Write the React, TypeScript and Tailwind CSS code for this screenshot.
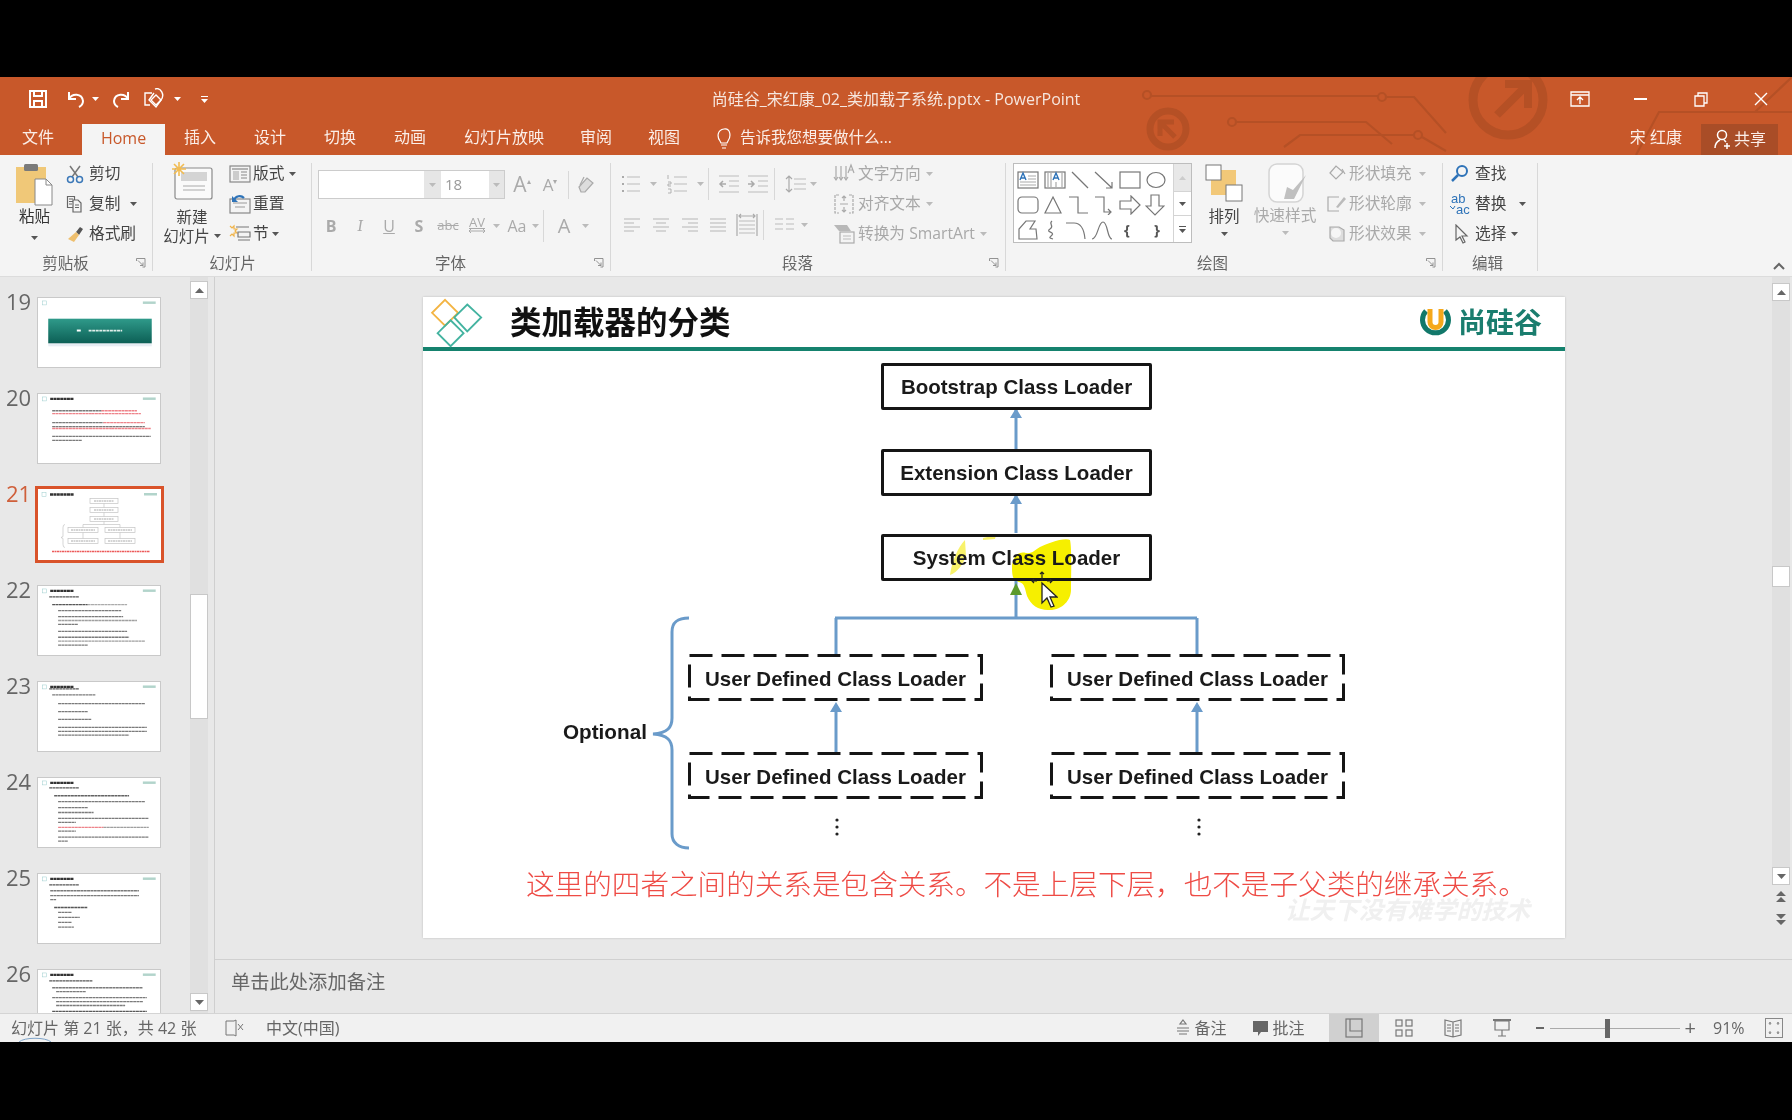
import React from 'react';

type Bar = [number, number, number, string?];
const K = '#444444', R = '#e8505a', D = '#111111';

const thumbLines: Record<number, Bar[]> = {
  20: [[14,17,50],[64,17,36,R],[14,20,40,R],[54,20,50,R],[14,29,52],[66,29,42,R],[14,33,34],[48,33,60],[14,35,60,R],[74,35,40,R],[14,43,100],[14,47,30]],
  22: [[11,11,30,D],[14,19,36,D],[50,19,40,'#888'],[20,25,64],[20,31,66],[20,35,80,'#777'],[20,39,20],[20,46,70],[20,52,72],[20,56,88,'#777'],[20,60,30]],
  23: [[11,7,30,D],[14,13,44],[20,22,88],[20,30,30],[20,38,34],[20,46,90],[20,50,90],[20,54,72]],
  24: [[11,10,30,D],[16,18,76,'#222'],[20,24,88],[20,30,30],[20,35,36],[20,41,92],[20,45,18],[20,50,46,R],[66,50,46,'#777'],[20,54,18],[20,60,92],[20,64,10]],
  25: [[11,11,30,D],[12,17,90],[12,22,90],[12,26,6],[16,34,34,D],[20,39,14],[20,44,22],[20,49,14],[20,54,16]],
  26: [[11,11,44,D],[14,18,92],[18,22,30],[14,28,96],[18,32,88],[18,36,70],[14,42,96,D],[18,46,90,D]],
};

function Thumb({ n, active }: { n: number; active?: boolean }) {
  return (
    <div className="flex h-[96px] shrink-0">
      <div className={`-mt-[6px] w-[35px] pl-[6px] text-[22px] leading-[20px] ${active ? 'text-[#cf5f3a]' : 'text-[#666]'}`}>{n}</div>
      <div className={active ? '-mt-[3px] h-[77px] w-[129px] border-[3px] border-[#d9532a] bg-white' : 'ml-[2px] h-[71px] w-[124px] border border-[#c9c9c9] bg-white'}>
        <svg viewBox="0 0 123 70" className="h-full w-full">
          <rect x="4" y="3" width="4" height="4" fill="none" stroke="#9cc" strokeWidth=".5" />
          <rect x="106" y="3.5" width="13" height="2.500" fill="#7fb8a8" opacity=".6" />
          {n !== 19 && <path d="M12 5h24" stroke="#333" strokeWidth="2.400" strokeDasharray="3 .4" />}
          {n === 19 && (
            <g>
              <defs><linearGradient id="tg" x1="0" y1="0" x2="0" y2="1"><stop offset="0" stopColor="#2f9a8a" /><stop offset="1" stopColor="#0c5f55" /></linearGradient></defs>
              <rect x="10" y="21" width="105" height="25" fill="url(#tg)" />
              <rect x="39" y="32" width="4" height="2" fill="#fff" />
              <path d="M51 33h34" stroke="#dfeee9" strokeWidth="1.800" strokeDasharray="3 .6" />
              <rect x="10" y="46" width="105" height="3" fill="#bcd" opacity=".35" />
            </g>
          )}
          {n === 21 && (
            <g fill="none" stroke="#c4c4c4" strokeWidth=".7">
              <rect x="52" y="9" width="28" height="5" />
              <rect x="52" y="18" width="28" height="5" />
              <rect x="52" y="27" width="28" height="5" />
              <rect x="30" y="38" width="30" height="5" />
              <rect x="67" y="38" width="30" height="5" />
              <rect x="30" y="49" width="30" height="5" />
              <rect x="67" y="49" width="30" height="5" />
              <path d="M56 11.500h20M56 20.500h20M56 29.500h20M33 40.500h24M70 40.500h24M33 51.500h24M70 51.500h24" stroke="#aaa" strokeWidth="1" strokeDasharray="2 .5" />
              <path d="M66 14v4M66 23v4M66 32v3M45 35h37M45 35v3M82 35v3M45 43v6M82 43v6M27 35q-2 0-2 3v9l-2 1 2 1v6q0 3 2 3" />
              <path d="M14 62h98" stroke="#ec5c5c" strokeWidth="1.500" strokeDasharray="2 .5" />
            </g>
          )}
          {(thumbLines[n] || []).map((l, i) => (
            <path key={i} d={`M${l[0]} ${l[1]}h${l[2]}`} stroke={l[3] || K} strokeWidth="1.300" strokeDasharray="3 .4" opacity=".7" />
          ))}
        </svg>
      </div>
    </div>
  );
}

const S = (p: React.SVGProps<SVGSVGElement> & { s?: number; h?: number }) => {
  const { s = 20, h, children, ...r } = p;
  return (
    <svg width={s} height={h ?? s} viewBox={`0 0 ${s} ${h ?? s}`} fill="none" stroke="currentColor" strokeWidth="1.2" {...r}>{children}</svg>
  );
};
const Caret = ({ c = '#555' }: { c?: string }) => (
  <svg width="7" height="4" viewBox="0 0 7 4" className="shrink-0"><path d="M0 0h7L3.5 4z" fill={c} /></svg>
);

function Small({ icon, text, caret, dim, gap = 4, w, cx = 6 }: { icon: React.ReactNode; text: string; caret?: boolean; dim?: boolean; gap?: number; w?: number; cx?: number }) {
  return (
    <div className={`flex h-[30px] items-center ${dim ? 'text-[#a8a8a8]' : 'text-[#444]'}`}>
      <div className="flex w-[22px] shrink-0 justify-center">{icon}</div>
      <span className="text-[15.700px] leading-none" style={{ marginLeft: gap, width: w }}>{text}</span>
      {caret && <span style={{ marginLeft: cx }}><Caret c={dim ? '#bbb' : '#555'} /></span>}
    </div>
  );
}

function Group({ w, label, launcher, children, noBorder, pr = 0 }: { w: number; label: string; launcher?: boolean; children: React.ReactNode; noBorder?: boolean; pr?: number }) {
  return (
    <div className={`relative flex h-full shrink-0 flex-col ${noBorder ? '' : 'after:absolute after:right-0 after:top-[8px] after:bottom-[5px] after:w-px after:bg-[#d8d8d8]'}`} style={{ width: w }}>
      <div className="flex h-[97px] shrink-0">{children}</div>
      <div className="flex h-[24px] items-center justify-center text-[15.500px] text-[#666]" style={{ paddingRight: pr }}>{label}</div>
      {launcher && (
        <svg width="10" height="10" viewBox="0 0 10 10" className="absolute bottom-[8px] right-[7px]" fill="none" stroke="#888"><path d="M.5 3V.5h8.5V9H6.500M2 2.500l5 5M7 4.500v3H4" strokeWidth=".9" /></svg>
      )}
    </div>
  );
}

const Gray = ({ children, w = 24, cls = '' }: { children: React.ReactNode; w?: number; cls?: string }) => (
  <div className={`flex shrink-0 items-center justify-center text-[#aaa] ${cls}`} style={{ width: w }}>{children}</div>
);
const VSep = ({ h = 28 }: { h?: number }) => <div className="mx-[4px] w-px shrink-0 bg-[#d8d8d8]" style={{ height: h }} />;

const Lines = ({ kind }: { kind: 'l' | 'c' | 'r' | 'j' }) => {
  const d = {
    l: 'M2 3h16M2 7h10M2 11h16M2 15h10',
    c: 'M2 3h16M5 7h10M2 11h16M5 15h10',
    r: 'M2 3h16M8 7h10M2 11h16M8 15h10',
    j: 'M2 3h16M2 7h16M2 11h16M2 15h16',
  }[kind];
  return <S s={20} h={18}><path d={d} stroke="#b5b5b5" /></S>;
};

function Ribbon() {
  return (
    <div className="flex h-[122px] shrink-0 border-b border-[#dcdcdc] bg-[#f4f4f4]">
      <Group w={153} label="剪贴板" launcher pr={22}>
        <div className="ml-[16px] flex w-[37px] flex-col items-center pt-[8px]">
          <svg width="37" height="44" viewBox="0 0 37 44">
            <rect x="0" y="4" width="30" height="36" fill="#f0c878" />
            <rect x="8" y="1" width="14" height="7" rx="1.500" fill="#7a7a7a" />
            <path d="M19 16h11l6 6v20H19z" fill="#fff" stroke="#888" />
            <path d="M30 16v6h6" fill="none" stroke="#888" />
          </svg>
          <span className="mt-0 text-[15.500px] leading-[18px] text-[#333]">粘贴</span>
          <span className="mt-[11px]"><Caret /></span>
        </div>
        <div className="ml-[11px] flex flex-col pt-[4px]">
          <Small text="剪切" gap={3} icon={<S s={20}><path d="M5 2l8 11M15 2L7 13" stroke="#777" strokeWidth="1.500" /><circle cx="5.500" cy="15.500" r="3" stroke="#3b78b8" strokeWidth="1.500" /><circle cx="14.500" cy="15.500" r="3" stroke="#3b78b8" strokeWidth="1.500" /></S>} />
          <Small text="复制" gap={3} caret cx={10} icon={<S s={20} className="text-[#666]"><path d="M2.500 2.500h7v11h-7zM4 5h4M4 7.500h4M4 10h3" /><path d="M8 6h5l3 3v9H8z" fill="#f4f4f4" /><path d="M10 11h4M10 13.500h4" /></S>} />
          <Small text="格式刷" gap={3} icon={<S s={20}><path d="M11 8l4-5 3 2-4 6z" fill="#555" stroke="none" /><path d="M3 15l8-7 3 3-5 7z" fill="#eebf6e" stroke="none" /></S>} />
        </div>
      </Group>

      <Group w={159} label="幻灯片">
        <div className="ml-[8px] flex w-[62px] flex-col items-center pt-[7px]">
          <svg width="42" height="38" viewBox="0 0 42 38">
            <rect x="4" y="6" width="37" height="31" rx="2" fill="#fafafa" stroke="#8a8a8a" strokeWidth="1.200" />
            <rect x="10" y="10" width="26" height="9" fill="#d4d4d4" />
            <path d="M12 24h22M12 28h22" stroke="#aaa" />
            <path d="M8 0v14M1 7h14M3 2l10 10M13 2L3 12" stroke="#f2bc52" strokeWidth="1.600" />
          </svg>
          <span className="mt-[8px] text-[15.500px] leading-[18px] text-[#444]">新建</span>
          <span className="flex items-center gap-[4px] text-[15.500px] leading-[20px] text-[#444]">幻灯片<Caret /></span>
        </div>
        <div className="ml-[6px] flex flex-col pt-[4px]">
          <Small text="版式" gap={2} caret cx={5} icon={<S s={22} h={18}><rect x="1" y="1" width="20" height="16" stroke="#888" /><path d="M3 4h16" stroke="#888" /><rect x="4" y="6" width="6" height="9" fill="#ccc" stroke="none" /><path d="M12 7h6M12 10h6M12 13h6" stroke="#888" /></S>} />
          <Small text="重置" gap={2} icon={<S s={22} h={20}><rect x="1" y="5" width="20" height="14" stroke="#888" /><path d="M4 9h14M6 13h10" stroke="#999" /><path d="M5 6a6 6 0 0 1 10-2" stroke="#2e73b8" strokeWidth="2.200" /><path d="M3 2v6h6z" fill="#2e73b8" stroke="none" /></S>} />
          <Small text="节" gap={2} caret cx={3} icon={<S s={22} h={20}><path d="M1 2l2 2 2-2 0 3 3 0-2 2 2 2H5v3L3 10l-2 2" stroke="#f0b44a" /><path d="M7 3h13M9 8h12v5H9zM9 16h12" stroke="#777" /></S>} />
        </div>
      </Group>

      <Group w={299} label="字体" launcher pr={22}>
        <div className="ml-[6px] flex flex-col pt-[14px]">
          <div className="flex items-center">
            <div className="flex h-[29px] w-[187px] border border-[#ccc] bg-white text-[15px] text-[#999]">
              <div className="w-[105px]" />
              <div className="flex w-[17px] items-center justify-center bg-[#e6e6e6]"><Caret c="#bbb" /></div>
              <div className="w-[48px] pl-[4px] leading-[27px]">18</div>
              <div className="flex w-[15px] items-center justify-center bg-[#e6e6e6]"><Caret c="#bbb" /></div>
            </div>
            <Gray w={28} cls="ml-[3px] text-[21px]">A<sup className="text-[8px]">▴</sup></Gray>
            <Gray w={28} cls="text-[17px]">A<sup className="text-[8px]">▾</sup></Gray>
            <VSep />
            <Gray w={26}><S s={20}><path d="M3 12l8-9 6 5-8 9H5z" fill="#ddd" /><path d="M8 2l-4 8" stroke="#aaa" /></S></Gray>
          </div>
          <div className="mt-[9px] flex h-[32px] items-center text-[#aaa]">
            <Gray w={20} cls="ml-[3px] text-[16px] font-bold">B</Gray>
            <Gray w={20} cls="ml-[9px] font-serif text-[17px] italic">I</Gray>
            <Gray w={20} cls="ml-[9px] text-[16px] underline">U</Gray>
            <Gray w={20} cls="ml-[10px] text-[16px] font-bold">S</Gray>
            <Gray w={24} cls="ml-[7px] text-[13px] line-through">abc</Gray>
            <Gray w={24} cls="ml-[5px] flex-col text-[13px] leading-[11px]"><span className="underline">AV</span><svg width="18" height="6" viewBox="0 0 18 6" fill="none" stroke="#aaa"><path d="M1 3h16M3 1L1 3l2 2M15 1l2 2-2 2" /></svg></Gray>
            <span className="ml-[4px]"><Caret c="#bbb" /></span>
            <Gray w={22} cls="ml-[6px] text-[16px]">Aa</Gray>
            <span className="ml-[4px]"><Caret c="#bbb" /></span>
            <VSep h={32} />
            <Gray w={24} cls="ml-[4px] text-[20px]">A</Gray>
            <span className="ml-[6px]"><Caret c="#bbb" /></span>
          </div>
        </div>
      </Group>

      <Group w={395} label="段落" launcher pr={22}>
        <div className="ml-[9px] flex w-[208px] flex-col pt-[15px]">
          <div className="flex h-[28px] items-center">
            <Gray w={22}><S s={22} h={20}><path d="M7 3h13M7 10h13M7 17h13" stroke="#bbb" /><path d="M2 3h2M2 10h2M2 17h2" stroke="#aaa" strokeWidth="2" /></S></Gray>
            <span className="ml-[8px]"><Caret c="#bbb" /></span>
            <Gray w={24} cls="ml-[8px]"><S s={22} h={20}><path d="M8 3h13M8 10h13M8 17h13" stroke="#bbb" /><path d="M2 1v4M2 8h3v2H2v2h3M2 15h3v4H2" stroke="#aaa" strokeWidth=".9" /></S></Gray>
            <span className="ml-[8px]"><Caret c="#bbb" /></span>
            <VSep h={32} />
            <Gray w={24} cls="ml-[4px]"><S s={22} h={20}><path d="M1 2h20M11 7h10M11 12h10M1 18h20" stroke="#bbb" /><path d="M8 10H2M5 7l-3 3 3 3" stroke="#aaa" strokeWidth="1.500" /></S></Gray>
            <Gray w={24} cls="ml-[5px]"><S s={22} h={20}><path d="M1 2h20M11 7h10M11 12h10M1 18h20" stroke="#bbb" /><path d="M1 10h6M4 7l3 3-3 3" stroke="#aaa" strokeWidth="1.500" /></S></Gray>
            <VSep h={32} />
            <Gray w={24} cls="ml-[5px]"><S s={22} h={20}><path d="M9 5h12M9 10h12M9 15h12" stroke="#bbb" /><path d="M4 2v16M1 5l3-3 3 3M1 15l3 3 3-3" stroke="#aaa" /></S></Gray>
            <span className="ml-[2px]"><Caret c="#bbb" /></span>
          </div>
          <div className="mt-[9px] flex h-[36px] items-center">
            <Gray w={24}><Lines kind="l" /></Gray>
            <Gray w={24} cls="ml-[5px]"><Lines kind="c" /></Gray>
            <Gray w={24} cls="ml-[5px]"><Lines kind="r" /></Gray>
            <Gray w={24} cls="ml-[4px]"><Lines kind="j" /></Gray>
            <Gray w={24} cls="ml-[5px]"><S s={22} h={24}><path d="M1 1v22M21 1v22M3 3h16M5 1L3 3l2 2M17 1l2 2-2 2" stroke="#aaa" /><path d="M3 8h16M3 12h16M3 16h16M3 20h16" stroke="#bbb" /></S></Gray>
            <VSep h={30} />
            <Gray w={24} cls="ml-[4px]"><S s={22} h={18}><path d="M2 3h8M13 3h8M2 8h8M13 8h8M2 13h8M13 13h8" stroke="#bbb" /></S></Gray>
            <span className="ml-[5px]"><Caret c="#bbb" /></span>
          </div>
        </div>
        <div className="ml-[5px] flex flex-col pt-[4px]">
          <Small dim text="文字方向" gap={3} caret cx={5} icon={<S s={22}><path d="M3 3v13M8 3v13M13 3v13" stroke="#aaa" /><path d="M1 14l2 3 2-3M6 14l2 3 2-3M11 14l2 3 2-3" stroke="#aaa" /><path d="M15 10l3-8 3 8M16 7h4" stroke="#aaa" /></S>} />
          <Small dim text="对齐文本" gap={3} caret cx={5} icon={<S s={22}><path d="M6 2H2v18h4M16 2h4v18h-4" stroke="#aaa" strokeDasharray="3 1" /><path d="M11 3v5M9 5l2-2 2 2M11 19v-5M9 17l2 2 2-2M7 11h8" stroke="#aaa" /></S>} />
          <Small dim text="转换为 SmartArt" gap={3} caret cx={5} icon={<S s={22}><path d="M1 2h13l4 6H6z" fill="#b8b8b8" stroke="none" /><rect x="7" y="9" width="14" height="11" stroke="#aaa" /><path d="M10 13h8M10 16h8" stroke="#bbb" /></S>} />
        </div>
      </Group>

      <Group w={437} label="绘图" launcher pr={24}>
        <div className="ml-[7px] mt-[8px] flex h-[80px] w-[179px] border border-[#bdbdbd] bg-white">
          <div className="w-[160px] pl-[3px] pt-[3px] text-[#777]">
            <div className="flex h-[25px] items-center gap-[5px]">
              <S s={22} h={20}><rect x="1" y="2" width="20" height="16" /><path d="M3 10l3-7 3 7M4 8h4" stroke="#2e73b8" strokeWidth="1.400" /><path d="M11 6h8M11 9h8M3 12h16M3 15h16" stroke="#aaa" /></S>
              <S s={22} h={20}><rect x="1" y="2" width="20" height="16" /><path d="M9 10l3-7 3 7M10 8h4" stroke="#2e73b8" strokeWidth="1.400" /><path d="M4 3v14M7 3v14M12 12v5M18 3v14" stroke="#aaa" /></S>
              <S s={18} h={18}><path d="M1 1l16 16" /></S>
              <S s={20} h={18}><path d="M1 1l17 16M12 17h6v-6" /></S>
              <S s={22} h={18}><rect x="1" y="1" width="20" height="16" /></S>
              <S s={20} h={18}><ellipse cx="10" cy="9" rx="9" ry="7.500" /></S>
            </div>
            <div className="flex h-[25px] items-center gap-[4px]">
              <S s={22} h={18}><rect x="1" y="1" width="20" height="16" rx="4" /></S>
              <S s={20} h={20}><path d="M10 2l8 16H2z" /></S>
              <S s={22} h={20}><path d="M2 2h9v16h10" /></S>
              <S s={22} h={20}><path d="M2 2h9v15h6M15 14l3 3-3 3" /></S>
              <S s={22} h={20}><path d="M1 6h11V1l9 9-9 9v-5H1z" /></S>
              <S s={20} h={22}><path d="M6 1h8v11h5l-9 9-9-9h5z" /></S>
            </div>
            <div className="flex h-[25px] items-center gap-[4px]">
              <S s={22} h={20}><path d="M2 19V9l7-8h9l-5 8h6l1 10z" /></S>
              <S s={18} h={20}><path d="M9 1C5 4 12 6 7 9s5 3 2 6-3 3 1 4" /></S>
              <S s={22} h={20}><path d="M1 3h8c6 0 10 5 11 16" /></S>
              <S s={22} h={20}><path d="M1 19C7 19 7 2 12 2s4 17 9 17" /></S>
              <span className="w-[20px] text-center text-[15px] font-bold text-[#555]">{'{'}</span>
              <span className="ml-[6px] w-[20px] text-center text-[15px] font-bold text-[#555]">{'}'}</span>
            </div>
          </div>
          <div className="flex w-[18px] flex-col border-l border-[#d4d4d4]">
            <div className="flex h-[27px] items-center justify-center bg-[#e8e8e8]"><svg width="7" height="4"><path d="M0 4h7L3.500 0z" fill="#ccc" /></svg></div>
            <div className="flex h-[25px] items-center justify-center border-y border-[#d4d4d4]"><Caret /></div>
            <div className="flex flex-1 flex-col items-center justify-center gap-[2px]"><div className="h-px w-[7px] bg-[#555]" /><Caret /></div>
          </div>
        </div>
        <div className="ml-[12px] flex w-[40px] flex-col items-center pt-[9px]">
          <svg width="38" height="38" viewBox="0 0 38 38">
            <rect x="6" y="6" width="25" height="25" fill="#f2c878" />
            <rect x="1" y="1" width="15" height="15" fill="#fff" stroke="#777" />
            <rect x="21" y="21" width="16" height="16" fill="#fff" stroke="#777" />
          </svg>
          <span className="mt-[5px] text-[15.500px] leading-[18px] text-[#444]">排列</span>
          <span className="mt-[7px]"><Caret /></span>
        </div>
        <div className="ml-[9px] flex w-[64px] flex-col items-center pt-[8px]">
          <svg width="40" height="42" viewBox="0 0 40 42" className="ml-[5px]">
            <rect x="1" y="1" width="34" height="38" rx="8" fill="#fbfbfb" stroke="#d4d4d4" strokeWidth="1.500" />
            <path d="M38 12L25 27l-6-3-3 12h10l5-10z" fill="#c0c0c0" />
          </svg>
          <span className="mt-[1px] text-[15.700px] leading-[18px] text-[#aaa]">快速样式</span>
          <span className="mt-[7px]"><Caret c="#bbb" /></span>
        </div>
        <div className="ml-[9px] flex flex-col pt-[4px]">
          <Small dim text="形状填充" gap={1} caret cx={7} icon={<S s={20}><path d="M3 9l6-7 7 6-7 7z" stroke="#aaa" /><path d="M15 5l3 5" stroke="#aaa" /></S>} />
          <Small dim text="形状轮廓" gap={1} caret cx={7} icon={<S s={20}><path d="M12 3H1v14h11" stroke="#aaa" /><path d="M9 13l8-10 2 2-8 9z" fill="#bbb" stroke="none" /></S>} />
          <Small dim text="形状效果" gap={1} caret cx={7} icon={<S s={20}><path d="M3 3h9l5 3v11H6l-3-3z" fill="#ddd" stroke="#aaa" /><circle cx="9" cy="9" r="5" fill="#f6f6f6" stroke="none" /></S>} />
        </div>
      </Group>

      <Group w={95} label="编辑" pr={6}>
        <div className="ml-[6px] flex flex-col pt-[4px]">
          <Small text="查找" gap={4} icon={<S s={20}><circle cx="12" cy="7" r="5" stroke="#2e73b8" strokeWidth="2" /><path d="M8 11l-6 6" stroke="#2e73b8" strokeWidth="2.500" /></S>} />
          <Small text="替换" gap={4} caret cx={13} icon={<svg width="22" height="24" viewBox="0 0 22 24"><text x="2" y="11" fontSize="13" fill="#2e73b8" fontFamily="Liberation Sans">ab</text><text x="7" y="22" fontSize="13" fill="#2e73b8" fontFamily="Liberation Sans">ac</text><path d="M1 14l3 3 2-3" stroke="#2e73b8" fill="none" /></svg>} />
          <Small text="选择" gap={4} caret cx={5} icon={<S s={20}><path d="M6 1v15l4-3 3 6 2-1-3-6h5z" stroke="#666" /></S>} />
        </div>
      </Group>

      <div className="flex flex-1 items-end justify-end pb-[6px] pr-[7px]">
        <svg width="12" height="8" viewBox="0 0 12 8"><path d="M1 7l5-5 5 5" fill="none" stroke="#666" strokeWidth="2" /></svg>
      </div>
    </div>
  );
}

function ScrollBtn({ up }: { up?: boolean }) {
  return (
    <div className="flex h-[18px] w-[18px] shrink-0 items-center justify-center border border-[#c8c8c8] bg-white">
      <svg width="9" height="5" viewBox="0 0 9 5"><path d={up ? 'M0 5h9L4.500 0z' : 'M0 0h9L4.500 5z'} fill="#666" /></svg>
    </div>
  );
}

const Solid = ({ top, t }: { top: number; t: string }) => (
  <div className="absolute left-[458px] flex h-[47px] w-[271px] items-center justify-center rounded-[2px] border-[3px] border-[#151515] pt-[2px] text-[20.500px] font-bold text-[#1a1a1a]" style={{ top }}>{t}</div>
);
const Dashed = ({ left, top }: { left: number; top: number }) => (
  <div className="absolute flex h-[47px] w-[295px] items-center justify-center pt-[3px] text-[20.500px] font-bold text-[#1a1a1a]" style={{ left, top }}>
    <svg className="absolute inset-0" width="295" height="47" viewBox="0 0 295 47" fill="none">
      <rect x="1.500" y="1.500" width="292" height="44" stroke="#151515" strokeWidth="3" strokeDasharray="23 9" />
    </svg>
    User Defined Class Loader
  </div>
);

function Slide() {
  return (
    <div className="relative h-[641px] w-[1142px] overflow-hidden bg-white font-['Liberation_Sans','Noto_Sans_CJK_SC',sans-serif] shadow-[0_0_2px_#bbb]">
      <div className="flex h-[54px] items-center border-b-4 border-[#15826e]">
        <svg width="56" height="50" viewBox="0 0 60 54" className="ml-[7px] mt-[2px] shrink-0" fill="none" strokeWidth="2">
          <path d="M16 2l14 14-14 14L2 16z" stroke="#f3b443" />
          <path d="M40 7l15 14-15 15-14-15z" stroke="#43b3a0" />
          <path d="M22 24l14 14-14 14L8 38z" stroke="#43b3a0" />
        </svg>
        <span className="ml-[24px] mt-[3px] text-[31.500px] font-bold leading-none text-[#111]">类加载器的分类</span>
        <div className="ml-auto mr-[23px] mt-[3px] flex items-center gap-[6px]">
          <svg width="33" height="33" viewBox="0 0 33 33" fill="none">
            <path d="M7 4a13 13 0 1 0 19 0" stroke="#12786a" strokeWidth="5" />
            <path d="M11 2v13a5.500 5.500 0 0 0 11 0V2" stroke="#f5a81c" strokeWidth="5" />
          </svg>
          <span className="text-[28px] font-bold leading-none text-[#1a7d6e]">尚硅谷</span>
        </div>
      </div>

      <svg className="absolute inset-0" width="1142" height="641" viewBox="423 297 1142 641" fill="none">
        <path d="M1012 565c2-10 7-14 14-12 6 1 9-3 14-6 6-3 24-10 30-7 2 8 1 38 1 50 0 10-9 21-23 20-10 0-17-5-21-14-2-6-2-13-8-14-7-1-7-8-7-17z" fill="#f6ef00" />
        <path d="M950 575c2-14 8-28 15-35l1 16c-3 8-8 16-16 19zM983 538l13-3-1 4-12 1z" fill="#f8f26a" />
        <path d="M1016 409v40M1016 495v38M1016 580v38M835 618h362M836 618v36M1197 618v36M836 752v-44M1197 752v-44" stroke="#6a9bca" strokeWidth="3" />
        <path d="M1016 408l-6 10h12zM1016 494l-6 10h12zM836 702l-6 10h12zM1197 702l-6 10h12z" fill="#6a9bca" />
        <path d="M1016 583l-6 12h12z" fill="#5c9a2c" />
        <path d="M689 618c-10 0-17 3-17 14v86c0 9-4 15-19 16 15 1 19 7 19 16v84c0 9 7 14 17 14" stroke="#6a9bca" strokeWidth="3" />
        <g fill="#222">
          <circle cx="837" cy="820" r="1.600" /><circle cx="837" cy="827" r="1.600" /><circle cx="837" cy="834" r="1.600" />
          <circle cx="1199" cy="820" r="1.600" /><circle cx="1199" cy="827" r="1.600" /><circle cx="1199" cy="834" r="1.600" />
        </g>
      </svg>

      <Solid top={66} t="Bootstrap Class Loader" />
      <Solid top={152} t="Extension Class Loader" />
      <Solid top={237} t="System Class Loader" />
      <Dashed left={265} top={357} />
      <Dashed left={627} top={357} />
      <Dashed left={265} top={455} />
      <Dashed left={627} top={455} />
      <div className="absolute left-[140px] top-[423px] text-[20.700px] font-bold leading-[24px] text-[#1a1a1a]">Optional</div>

      <svg className="absolute left-[601px] top-[268px]" width="34" height="44" viewBox="0 0 34 44" fill="none">
        <path d="M18 7v9M16 9l2-2 2 2M8 16h5M10 14l-2 2 2 2M28 16h-5M26 14l2 2-2 2" stroke="#222" strokeWidth="1.200" />
        <path d="M18 18v20l5-5 4 9 3-1-4-9h7z" fill="#fff" stroke="#222" strokeWidth="1.300" />
      </svg>

      <div className="absolute left-[103px] top-[576px] whitespace-nowrap text-[28.600px] font-light leading-[24px] text-[#ee4b45]">这里的四者之间的关系是包含关系。不是上层下层，也不是子父类的继承关系。</div>
      <div className="absolute left-[862px] top-[601px] whitespace-nowrap text-[24.500px] font-bold italic leading-[26px] text-[#f0f0f0]">让天下没有难学的技术</div>
    </div>
  );
}

function StatusBar() {
  return (
    <div className="relative flex h-[29px] shrink-0 items-center border-t border-[#d4d4d4] bg-[#f1f1f1] text-[16px] text-[#666]">
      <span className="ml-[11px] w-[190px] whitespace-nowrap">幻灯片 第 21 张，共 42 张</span>
      <svg width="20" height="18" viewBox="0 0 20 18" className="ml-[24px]" fill="none" stroke="#777"><path d="M9 2H1v14h8l2 1V1zM3 2v0" /><path d="M13 5l5 6M18 5l-5 6" /></svg>
      <span className="ml-[21px]">中文(中国)</span>
      <svg className="absolute bottom-0 left-[18px]" width="34" height="5" viewBox="0 0 34 5" fill="none"><path d="M1 5C6 0 28 0 33 5" stroke="#7da3c8" /></svg>
      <div className="ml-auto flex h-full items-center">
        <S s={18} className="text-[#777]"><path d="M9 1l3 4H6zM3 9h12M3 12h12M5 15h8" /></S>
        <span className="ml-[3px]">备注</span>
        <svg width="18" height="18" viewBox="0 0 18 18" className="ml-[25px]"><path d="M1 2h15v11H9l-3 4v-4H1z" fill="#666" /></svg>
        <span className="ml-[3px]">批注</span>
        <div className="ml-[24px] flex h-full w-[50px] items-center justify-center bg-[#d0d0d0]">
          <S s={20} className="text-[#777]"><rect x="2" y="1" width="16" height="18" /><path d="M6 1v12h12M6 13v0" /></S>
        </div>
        <div className="flex w-[50px] justify-center"><S s={20} className="text-[#777]"><rect x="2" y="2" width="6" height="6" /><rect x="12" y="2" width="6" height="6" /><rect x="2" y="12" width="6" height="6" /><rect x="12" y="12" width="6" height="6" /></S></div>
        <div className="flex w-[48px] justify-center"><S s={20} className="text-[#777]"><path d="M2 2l8 2 8-2v15l-8 2-8-2zM10 4v15M4 7h4M4 10h4M4 13h4M12 7h4M12 10h4M12 13h4" /></S></div>
        <div className="flex w-[50px] justify-center"><S s={20} className="text-[#777]"><path d="M1 2h18" strokeWidth="2" /><path d="M3 3h14v9H3zM10 12v6M6 18h8" /></S></div>
        <div className="ml-[9px] h-[2px] w-[8px] bg-[#666]" />
        <div className="relative ml-[6px] h-px w-[130px] bg-[#aaa]">
          <div className="absolute left-[55px] -top-[9px] h-[19px] w-[5px] bg-[#666]" />
        </div>
        <span className="ml-[5px] text-[20px] leading-none">+</span>
        <span className="ml-[17px] w-[36px]">91%</span>
        <svg width="18" height="20" viewBox="0 0 18 20" className="ml-[16px] mr-[9px]" fill="none" stroke="#888"><rect x=".5" y=".5" width="17" height="19" /><path d="M5 4l-1 2h2zM13 4l-1 2h2zM5 16l-1-2h2zM13 16l-1-2h2z" /></svg>
      </div>
    </div>
  );
}

function Circuit() {
  return (
    <svg className="pointer-events-none absolute inset-0 h-full w-full" viewBox="0 0 1792 78" fill="none" stroke="#b24f25" strokeWidth="2.200" opacity=".85">
      <circle cx="1147" cy="18" r="4" /><path d="M1151 19h227" />
      <circle cx="1382" cy="20" r="4" /><path d="M1386 20h28l32 36" />
      <circle cx="1232" cy="45" r="4" /><path d="M1236 45h130l26 22" />
      <circle cx="1418" cy="58" r="4" /><path d="M1284 70l16-12h114M1422 60l24 14" />
      <circle cx="1508" cy="23" r="35" strokeWidth="9" /><path d="M1497 38l30-30M1505 7h23v24" strokeWidth="8" />
      <circle cx="1168" cy="52" r="18" strokeWidth="7" /><path d="M1160 45l15 15M1160 59V45h14" strokeWidth="5" />
      <path d="M1636 78l23-43h133M1755 35l37-35" />
    </svg>
  );
}

const tabs: [string, number][] = [['插入', 19], ['设计', 38], ['切换', 38], ['动画', 38], ['幻灯片放映', 38], ['审阅', 36], ['视图', 36]];

export default function App() {
  return (
    <div className="flex h-[1120px] w-[1792px] flex-col overflow-hidden bg-black pt-[77px] font-['Open_Sans','Noto_Sans_CJK_SC',sans-serif]">
      <div className="flex h-[965px] flex-col bg-[#e8e8e8] blur-[0.4px]">
        <div className="relative h-[78px] shrink-0 bg-[#c8582a] text-white">
          <Circuit />
          <div className="relative grid h-[44px] grid-cols-[1fr_auto_1fr] items-center">
            <div className="flex items-center pl-[28px]">
              <svg width="20" height="20" viewBox="0 0 20 20" fill="none" stroke="#fff" strokeWidth="2"><path d="M2 2h16v16H2zM6 2v5h8V2M6 18v-6h8v6" /></svg>
              <svg width="20" height="20" viewBox="0 0 20 20" className="ml-[18px]" fill="none" stroke="#fff" strokeWidth="2"><path d="M3 3v7h7M3 10c3-6 13-6 14 2 0 3-2 5-4 6" /></svg>
              <span className="ml-[6px]"><Caret c="#fff" /></span>
              <svg width="20" height="20" viewBox="0 0 20 20" className="ml-[12px]" fill="none" stroke="#fff" strokeWidth="2"><path d="M17 3v7h-7M17 10C14 4 4 4 3 12c0 3 2 5 4 6" /></svg>
              <svg width="24" height="22" viewBox="0 0 24 22" className="ml-[13px]" fill="none" stroke="#fff" strokeWidth="1.400"><path d="M8 5H1v12h5M11 1c6-2 10 6 6 11l-5 7-7-7 5-7" /><path d="M12 7l5 5-5 5-5-5z" /></svg>
              <span className="ml-[6px]"><Caret c="#fff" /></span>
              <div className="ml-[20px] flex flex-col items-center gap-[2px]"><div className="h-px w-[7px] bg-white" /><Caret c="#fff" /></div>
            </div>
            <div className="text-[16px] text-[#f6e6de]">尚硅谷_宋红康_02_类加载子系统.pptx - PowerPoint</div>
            <div className="flex items-center justify-end">
              <svg width="20" height="16" viewBox="0 0 20 16" fill="none" stroke="#fff" strokeWidth="1.300"><path d="M1 1h18v14H1zM1 4h18M10 13V6M7 9l3-3 3 3" /></svg>
              <div className="ml-[44px] h-[2px] w-[13px] bg-white" />
              <svg width="14" height="15" viewBox="0 0 14 15" className="ml-[47px]" fill="none" stroke="#fff" strokeWidth="1.300"><path d="M1 4h9v10H1zM4 4V1h9v10h-3" /></svg>
              <svg width="14" height="14" viewBox="0 0 14 14" className="ml-[46px] mr-[24px]" fill="none" stroke="#fff" strokeWidth="1.400"><path d="M1 1l12 12M13 1L1 13" /></svg>
            </div>
          </div>
          <div className="relative flex h-[34px] items-end text-[15.500px] leading-none text-[#fbeee8]">
            <span className="mb-[10px] ml-[22px] w-[60px] text-[16px]">文件</span>
            <div className="flex h-[31px] w-[83px] items-center justify-center bg-[#f4f4f4] pb-[3px] text-[16px] text-[#c8582a]">Home</div>
            {tabs.map(([t, m]) => <span key={t} className="mb-[10px] text-[16px]" style={{ marginLeft: m }}>{t}</span>)}
            <svg width="16" height="21" viewBox="0 0 16 21" className="mb-[6px] ml-[36px]" fill="none" stroke="#fff" strokeWidth="1.200"><path d="M4 13C1 9 1 2 8 1s7 8 4 12l-1 2H5zM5 17h6M6 20h4" /></svg>
            <span className="mb-[10px] ml-[8px] text-[15.500px]">告诉我您想要做什么...</span>
            <span className="mb-[10px] ml-auto text-[16px]">宋 红康</span>
            <div className="ml-[19px] mr-[14px] flex h-[31px] w-[77px] items-center justify-center gap-[3px] bg-[#a94d27] pb-[2px] text-[16px]">
              <svg width="18" height="20" viewBox="0 0 18 20" fill="none" stroke="#fff" strokeWidth="1.500"><circle cx="9" cy="6" r="4.500" /><path d="M2 19c0-5 3-7 5-8M11 11l2 2M11 17h6M14 14v6" /></svg>
              共享
            </div>
          </div>
        </div>

        <Ribbon />

        <div className="flex min-h-0 flex-1">
          <div className="flex w-[215px] shrink-0 border-r border-[#cfcfcf]">
            <div className="h-full w-[190px] overflow-hidden pt-[20px]">
              {[19, 20, 21, 22, 23, 24, 25, 26].map((n) => <Thumb key={n} n={n} active={n === 21} />)}
            </div>
            <div className="flex h-full w-[18px] flex-col bg-[#e0e0e0] pb-[2px] pt-[4px]">
              <ScrollBtn up />
              <div className="mt-[295px] h-[125px] w-[18px] border border-[#c8c8c8] bg-white" />
              <div className="flex-1" />
              <ScrollBtn />
            </div>
          </div>

          <div className="flex min-w-0 flex-1 flex-col">
            <div className="flex h-[682px] shrink-0">
              <div className="flex-1 pl-[208px] pt-[20px]"><Slide /></div>
              <div className="mr-[2px] flex w-[18px] flex-col items-center">
                <div className="flex h-[608px] w-full flex-col bg-[#e0e0e0] pt-[6px]">
                  <ScrollBtn up />
                  <div className="mt-[265px] h-[21px] w-[18px] border border-[#c8c8c8] bg-white" />
                  <div className="flex-1" />
                  <ScrollBtn />
                </div>
                <svg width="10" height="13" viewBox="0 0 10 13" fill="#666" className="mt-[5px]"><path d="M0 6l5-5 5 5zM0 12l5-5 5 5z" /></svg>
                <svg width="10" height="13" viewBox="0 0 10 13" fill="#666" className="mt-[10px]"><path d="M0 1h10l-5 5zM0 7h10l-5 5z" /></svg>
              </div>
            </div>
            <div className="flex flex-1 items-center border-t border-[#d0d0d0] pb-[8px] pl-[16px] text-[19.300px] text-[#666]">单击此处添加备注</div>
          </div>
        </div>

        <StatusBar />
      </div>
    </div>
  );
}
